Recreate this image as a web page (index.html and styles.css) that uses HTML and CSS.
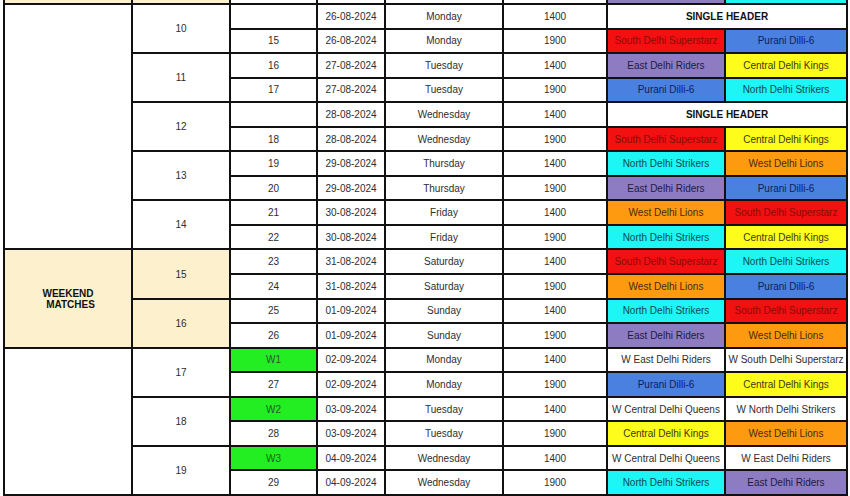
FILE: index.html
```html
<!DOCTYPE html>
<html>
<head>
<meta charset="utf-8">
<link rel="stylesheet" href="styles.css">
</head>
<body>
<table class="sched">
<colgroup>
<col class="c0"><col class="c1"><col class="c2"><col class="c3"><col class="c4"><col class="c5"><col class="c6"><col class="c7">
</colgroup>
<tbody>
<tr class="prev"><td class="cr"></td><td class="cr"></td><td></td><td></td><td></td><td></td><td class="p"></td><td class="c"></td></tr>

<tr><td rowspan="10"></td><td rowspan="2">10</td><td></td><td>26-08-2024</td><td>Monday</td><td>1400</td><td colspan="2" class="bold">SINGLE HEADER</td></tr>
<tr><td>15</td><td>26-08-2024</td><td>Monday</td><td>1900</td><td class="r">South Delhi Superstarz</td><td class="b">Purani Dilli-6</td></tr>
<tr><td rowspan="2">11</td><td>16</td><td>27-08-2024</td><td>Tuesday</td><td>1400</td><td class="p">East Delhi Riders</td><td class="y">Central Delhi Kings</td></tr>
<tr><td>17</td><td>27-08-2024</td><td>Tuesday</td><td>1900</td><td class="b">Purani Dilli-6</td><td class="c">North Delhi Strikers</td></tr>
<tr><td rowspan="2">12</td><td></td><td>28-08-2024</td><td>Wednesday</td><td>1400</td><td colspan="2" class="bold">SINGLE HEADER</td></tr>
<tr><td>18</td><td>28-08-2024</td><td>Wednesday</td><td>1900</td><td class="r">South Delhi Superstarz</td><td class="y">Central Delhi Kings</td></tr>
<tr><td rowspan="2">13</td><td>19</td><td>29-08-2024</td><td>Thursday</td><td>1400</td><td class="c">North Delhi Strikers</td><td class="o">West Delhi Lions</td></tr>
<tr><td>20</td><td>29-08-2024</td><td>Thursday</td><td>1900</td><td class="p">East Delhi Riders</td><td class="b">Purani Dilli-6</td></tr>
<tr><td rowspan="2">14</td><td>21</td><td>30-08-2024</td><td>Friday</td><td>1400</td><td class="o">West Delhi Lions</td><td class="r">South Delhi Superstarz</td></tr>
<tr><td>22</td><td>30-08-2024</td><td>Friday</td><td>1900</td><td class="c">North Delhi Strikers</td><td class="y">Central Delhi Kings</td></tr>

<tr><td rowspan="4" class="cr bold">WEEKEND<br><span class="indent">MATCHES</span></td><td rowspan="2" class="cr">15</td><td>23</td><td>31-08-2024</td><td>Saturday</td><td>1400</td><td class="r">South Delhi Superstarz</td><td class="c">North Delhi Strikers</td></tr>
<tr><td>24</td><td>31-08-2024</td><td>Saturday</td><td>1900</td><td class="o">West Delhi Lions</td><td class="b">Purani Dilli-6</td></tr>
<tr><td rowspan="2" class="cr">16</td><td>25</td><td>01-09-2024</td><td>Sunday</td><td>1400</td><td class="c">North Delhi Strikers</td><td class="r">South Delhi Superstarz</td></tr>
<tr><td>26</td><td>01-09-2024</td><td>Sunday</td><td>1900</td><td class="p">East Delhi Riders</td><td class="o">West Delhi Lions</td></tr>

<tr><td rowspan="6"></td><td rowspan="2">17</td><td class="g">W1</td><td>02-09-2024</td><td>Monday</td><td>1400</td><td>W East Delhi Riders</td><td>W South Delhi Superstarz</td></tr>
<tr><td>27</td><td>02-09-2024</td><td>Monday</td><td>1900</td><td class="b">Purani Dilli-6</td><td class="y">Central Delhi Kings</td></tr>
<tr><td rowspan="2">18</td><td class="g">W2</td><td>03-09-2024</td><td>Tuesday</td><td>1400</td><td>W Central Delhi Queens</td><td>W North Delhi Strikers</td></tr>
<tr><td>28</td><td>03-09-2024</td><td>Tuesday</td><td>1900</td><td class="y">Central Delhi Kings</td><td class="o">West Delhi Lions</td></tr>
<tr><td rowspan="2">19</td><td class="g">W3</td><td>04-09-2024</td><td>Wednesday</td><td>1400</td><td>W Central Delhi Queens</td><td>W East Delhi Riders</td></tr>
<tr><td>29</td><td>04-09-2024</td><td>Wednesday</td><td>1900</td><td class="c">North Delhi Strikers</td><td class="p">East Delhi Riders</td></tr>
</tbody>
</table>
</body>
</html>
```
FILE: styles.css
```css
html, body {
  margin: 0;
  padding: 0;
  background: #ffffff;
  overflow: hidden;
}
body {
  font-family: "Liberation Sans", Arial, sans-serif;
  font-size: 10px;
  color: #2e2e2e;
}
.sched {
  border-collapse: collapse;
  table-layout: fixed;
  width: 845px;
  margin: -21px 0 0 3px;
}
.c0 { width: 128px; }
.c1 { width: 98px; }
.c2 { width: 87px; }
.c3 { width: 68px; }
.c4 { width: 118px; }
.c5 { width: 104px; }
.c6 { width: 118px; }
.c7 { width: 122px; }
.sched td {
  border: 2px solid #111111;
  height: 24.55px;
  padding: 0;
  text-align: center;
  vertical-align: middle;
  white-space: nowrap;
  line-height: 11px;
  box-sizing: border-box;
}
.sched tr.prev td { height: 24px; }
.bold { font-weight: bold; color: #111111; }
.indent { padding-left: 5px; }
.cr { background: #fdf0cd; }
.r { background: #f21010; color: #8a0a0a; }
.b { background: #4a80e0; color: #0d1e5c; }
.p { background: #8e7cc3; color: #1e1a40; }
.y { background: #fdfc1a; color: #3a3a10; }
.c { background: #1ef5f5; color: #0e4a52; }
.o { background: #fd9a10; color: #4a2a08; }
.g { background: #22ee22; color: #2a5a2a; }
```
